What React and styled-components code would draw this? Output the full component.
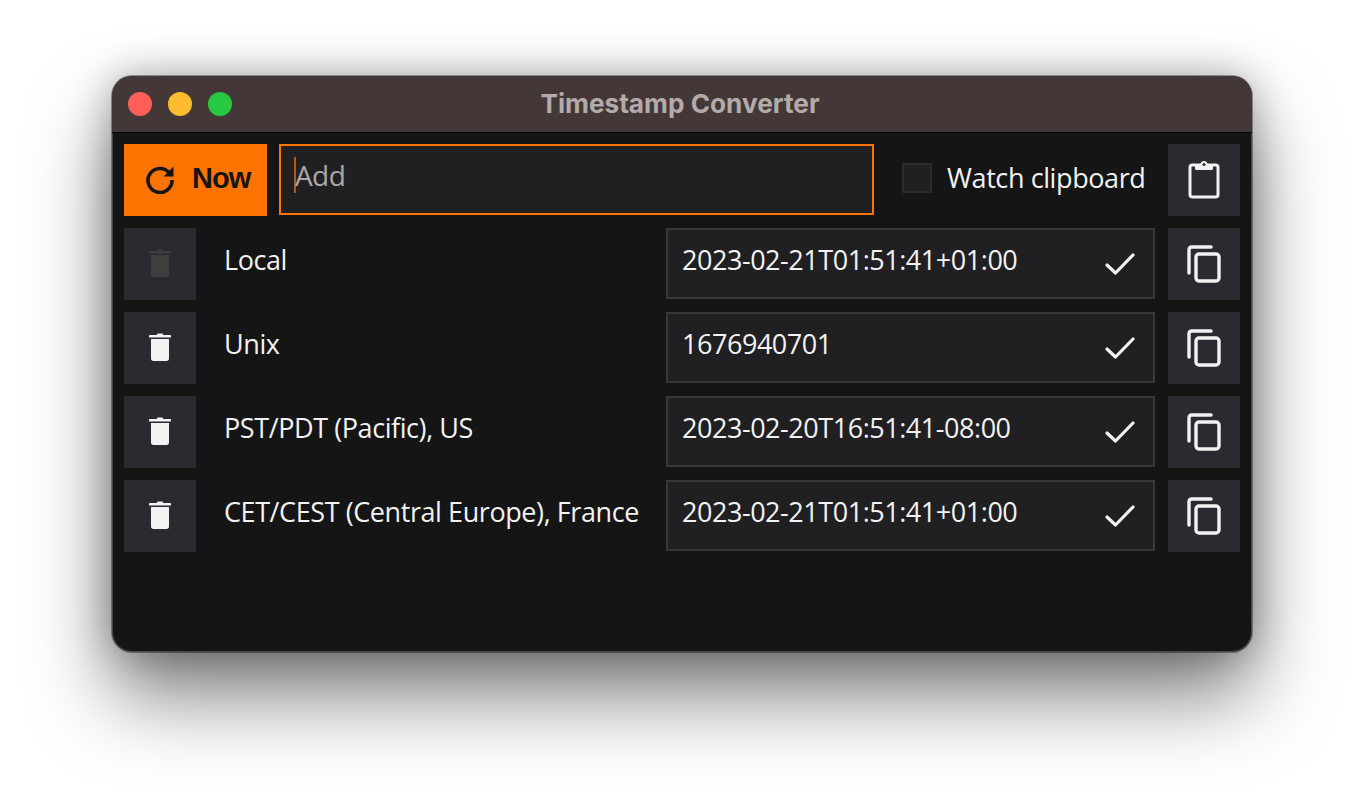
import React from "react";
import styled, { createGlobalStyle } from "styled-components";

const GlobalStyle = createGlobalStyle`
  html, body {
    margin: 0;
    padding: 0;
    background: #fff;
    overflow: hidden;
  }
`;

const rows = [
  { name: "Local", value: "2023-02-21T01:51:41+01:00", locked: true },
  { name: "Unix", value: "1676940701" },
  { name: "PST/PDT (Pacific), US", value: "2023-02-20T16:51:41-08:00" },
  { name: "CET/CEST (Central Europe), France", value: "2023-02-21T01:51:41+01:00" },
];

const TrashIcon = () => (
  <svg width="24" height="30" viewBox="0 0 24 30" fill="currentColor">
    <path d="M9 1.500C9 .8 9.600.5 10.200.5h3.600c.6 0 1.200.3 1.200 1V2h7.200c.6 0 .8.4.8.9v1.200c0 .3-.2.5-.5.5H1.500c-.3 0-.5-.2-.5-.5V2.900C1 2.400 1.200 2 1.800 2H9z" />
    <path d="M3 6h18v19.500c0 1.400-1 2.500-2.400 2.500H5.400C4 28 3 26.900 3 25.500z" />
  </svg>
);

const CopyIcon = () => (
  <svg width="34" height="38" viewBox="0 0 34 38" fill="none" stroke="currentColor" strokeWidth="3.400" strokeLinejoin="round" strokeLinecap="round">
    <path d="M24 2H5C3 2 2 3 2 5v23" />
    <rect x="9" y="9" width="23" height="27" rx="3" />
  </svg>
);

const ClipboardIcon = () => (
  <svg width="32" height="38" viewBox="0 0 32 38" fill="none">
    <rect x="2" y="4" width="28" height="32" rx="2.500" stroke="currentColor" strokeWidth="3" />
    <path d="M7 3h5.500C12.800 1.200 14.200 0 16 0s3.200 1.200 3.500 3H25v4.500c0 .8-.5 1.500-1.500 1.500h-15C7.500 9 7 8.300 7 7.500z" fill="currentColor" />
    <circle cx="16" cy="3.500" r="1.500" fill="#2a2b30" />
  </svg>
);

const CheckIcon = () => (
  <svg width="30" height="24" viewBox="0 0 30 24" fill="none" stroke="currentColor" strokeWidth="3.200" strokeLinecap="round" strokeLinejoin="round">
    <path d="M2 13l8.500 8L28 3" />
  </svg>
);

const RefreshIcon = () => (
  <svg width="30" height="30" viewBox="0 0 30 30" fill="none">
    <path d="M24 8.500A12 12 0 1 0 27 16" stroke="currentColor" strokeWidth="3.600" />
    <path d="M28.500 2.500V12.500H18.500z" fill="currentColor" />
  </svg>
);

const App = () => (
  <Page>
    <GlobalStyle />
    <Window>
      <TitleBar>
        <Lights>
          <Light color="#ff5f57" />
          <Light color="#febc2e" />
          <Light color="#28c840" />
        </Lights>
        <Title>Timestamp Converter</Title>
      </TitleBar>
      <Content>
        <Row>
          <NowButton>
            <RefreshIcon />
            <span>Now</span>
          </NowButton>
          <AddField>
            <Caret />
            Add
          </AddField>
          <WatchToggle>
            <CheckBox />
            Watch clipboard
          </WatchToggle>
          <IconButton>
            <ClipboardIcon />
          </IconButton>
        </Row>
        {rows.map((row) => (
          <Row key={row.name}>
            <IconButton $muted={row.locked}>
              <TrashIcon />
            </IconButton>
            <ZoneName>{row.name}</ZoneName>
            <ValueField>
              {row.value}
              <CheckIcon />
            </ValueField>
            <IconButton>
              <CopyIcon />
            </IconButton>
          </Row>
        ))}
      </Content>
    </Window>
  </Page>
);

export default App;

const Page = styled.div`
  width: 1364px;
  height: 800px;
  box-sizing: border-box;
  padding: 76px 112px 0;
  background: #fff;
`;

const Window = styled.div`
  width: 1140px;
  height: 576px;
  box-sizing: border-box;
  border-radius: 20px;
  overflow: hidden;
  background: #151515;
  box-shadow: 0 0 0 1px rgba(0, 0, 0, 0.35), inset 0 0 0 1px rgba(255, 255, 255, 0.22),
    0 44px 80px rgba(0, 0, 0, 0.5), 0 0 40px rgba(0, 0, 0, 0.3);
  font-family: "Open Sans", sans-serif;
  color: #f2f2f2;
`;

const TitleBar = styled.div`
  position: relative;
  height: 57px;
  box-sizing: border-box;
  display: flex;
  align-items: center;
  justify-content: center;
  padding: 0 4px 2px 0;
  background: #433837;
  border-bottom: 1px solid #000;
`;

const Lights = styled.div`
  position: absolute;
  left: 16px;
  top: 16px;
  display: flex;
  gap: 16px;
`;

const Light = styled.span`
  width: 24px;
  height: 24px;
  border-radius: 50%;
  background: ${(p) => p.color};
`;

const Title = styled.div`
  font-family: Inter, sans-serif;
  font-size: 26.2px;
  font-weight: 700;
  color: #b3abaa;
`;

const Content = styled.div`
  display: flex;
  flex-direction: column;
  gap: 12px;
  padding: 11px 12px;
`;

const Row = styled.div`
  display: flex;
  align-items: flex-start;
  height: 72px;
`;

const NowButton = styled.div`
  width: 143px;
  height: 72px;
  display: flex;
  align-items: center;
  gap: 17px;
  box-sizing: border-box;
  padding: 0 0 3px 21px;
  background: #ff7300;
  color: #151515;
  font-family: "Liberation Sans", sans-serif;
  font-size: 29px;
  font-weight: 700;
  letter-spacing: -0.9px;
`;

const AddField = styled.div`
  width: 595px;
  height: 71px;
  margin-left: 12px;
  box-sizing: border-box;
  border: 2px solid #ff7300;
  background: #202023;
  display: flex;
  align-items: center;
  padding: 0 14px 10px 13px;
  font-size: 28px;
  letter-spacing: -0.6px;
  color: #a8a8a8;
`;

const Caret = styled.span`
  width: 2px;
  height: 36px;
  margin-right: -1px;
  background: #b35a10;
`;

const WatchToggle = styled.label`
  width: 294px;
  height: 68px;
  box-sizing: border-box;
  padding: 0 0 1px 28px;
  display: flex;
  align-items: center;
  gap: 15px;
  font-size: 27px;
  letter-spacing: -0.4px;
  color: #f2f2f2;
`;

const CheckBox = styled.span`
  width: 30px;
  height: 30px;
  flex: none;
  margin-top: 1px;
  box-sizing: border-box;
  border: 2px solid #2c2c2c;
  background: #202023;
`;

const IconButton = styled.div`
  width: 72px;
  height: 72px;
  flex: none;
  display: flex;
  align-items: center;
  justify-content: center;
  background: #2a2b30;
  color: ${(p) => (p.$muted ? "#3e3e3e" : "#f2f2f2")};
`;

const ZoneName = styled.div`
  width: 470px;
  height: 62px;
  display: flex;
  align-items: center;
  box-sizing: border-box;
  padding-left: 28px;
  font-size: 27px;
  letter-spacing: -0.42px;
  white-space: nowrap;
  color: #f2f2f2;
`;

const ValueField = styled.div`
  width: 489px;
  height: 71px;
  margin-right: 13px;
  box-sizing: border-box;
  border: 2px solid #383838;
  background: #202023;
  display: flex;
  align-items: center;
  justify-content: space-between;
  padding: 0 18px 8px 14px;
  font-size: 27px;
  letter-spacing: -0.46px;
  color: #f2f2f2;

  svg {
    margin-top: 8px;
  }
`;
